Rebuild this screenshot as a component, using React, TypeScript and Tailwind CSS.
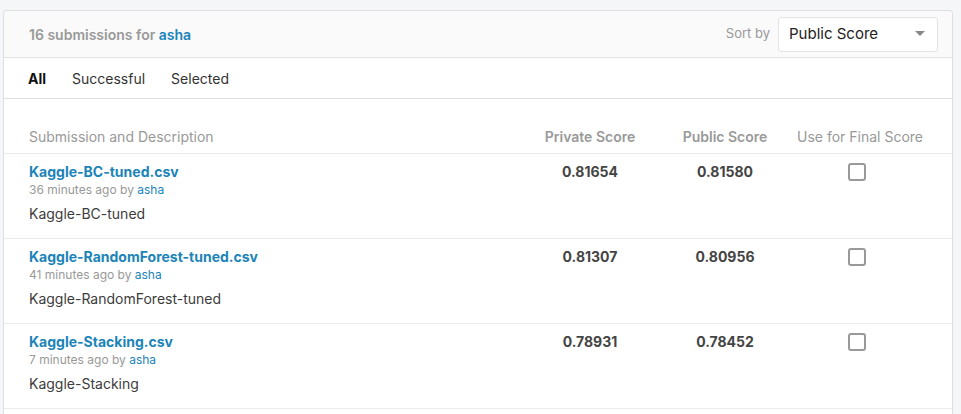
import React from "react";

const rows = [
  { file: "Kaggle-BC-tuned.csv", ago: "36 minutes ago", desc: "Kaggle-BC-tuned", priv: "0.81654", pub: "0.81580" },
  { file: "Kaggle-RandomForest-tuned.csv", ago: "41 minutes ago", desc: "Kaggle-RandomForest-tuned", priv: "0.81307", pub: "0.80956" },
  { file: "Kaggle-Stacking.csv", ago: "7 minutes ago", desc: "Kaggle-Stacking", priv: "0.78931", pub: "0.78452" },
];

export default function App() {
  return (
    <div className="h-[414px] overflow-hidden bg-[#f4f6f8] pl-[3px] pr-[8px] pt-[10px]" style={{ fontFamily: "Inter, 'Liberation Sans', sans-serif" }}>
      <div className="h-[420px] rounded-t-[4px] border border-b-0 border-[#dcdfe2] bg-white">
        <div className="flex h-[47px] items-center justify-between rounded-t-[4px] border-b border-[#e3e3e3] bg-[#fafafa] pl-[25px] pr-[14px]">
          <div className="text-[14px] font-semibold text-[#999]">
            16 submissions for <span className="text-[#1c84b8]">asha</span>
          </div>
          <div className="flex items-center gap-[8px]">
            <span className="text-[13px] text-[#999]">Sort by</span>
            <div className="flex h-[35px] w-[160px] items-center justify-between rounded-[3px] border border-[#e3e3e3] bg-white pl-[10px] pr-[12px]">
              <span className="text-[15px] text-[#222]">Public Score</span>
              <svg width="10" height="6" viewBox="0 0 10 6"><path d="M0 0 L10 0 L5 5 Z" fill="#888" /></svg>
            </div>
          </div>
        </div>
        <div className="flex h-[41px] items-center gap-[26px] border-b border-[#e0e0e0] pl-[24px] text-[14px] text-[#333]">
          <span className="font-bold text-[#111]">All</span>
          <span>Successful</span>
          <span>Selected</span>
        </div>
        <div className="flex h-[55px] items-end border-b border-[#ebebeb] pb-[6px] pl-[25px] pr-[24px] text-[14px] text-[#999]">
          <div className="flex-1">Submission and Description</div>
          <div className="w-[136px] text-center font-semibold">Private Score</div>
          <div className="w-[134px] text-center font-semibold">Public Score</div>
          <div className="w-[136px] text-center">Use for Final Score</div>
        </div>
        {rows.map((r) => (
          <div key={r.file} className="flex h-[85px] border-b border-[#ebebeb] pl-[25px] pr-[24px] pt-[8px]">
            <div className="flex flex-1 flex-col">
              <div className="text-[14px] leading-[20px] font-bold text-[#1c84b8]">{r.file}</div>
              <div className="text-[12px] leading-[16px] text-[#999]">
                {r.ago} by <span className="text-[#1c84b8]">asha</span>
              </div>
              <div className="mt-[6px] text-[14px] leading-[20px] text-[#3c3c3c]">{r.desc}</div>
            </div>
            <div className="w-[136px] text-center text-[14px] leading-[20px] font-bold text-[#444]">{r.priv}</div>
            <div className="w-[134px] text-center text-[14px] leading-[20px] font-bold text-[#444]">{r.pub}</div>
            <div className="flex w-[136px] justify-center pr-[6px] pt-[1px]">
              <div className="h-[18px] w-[18px] rounded-[3px] border-2 border-[#999]" />
            </div>
          </div>
        ))}
      </div>
    </div>
  );
}
